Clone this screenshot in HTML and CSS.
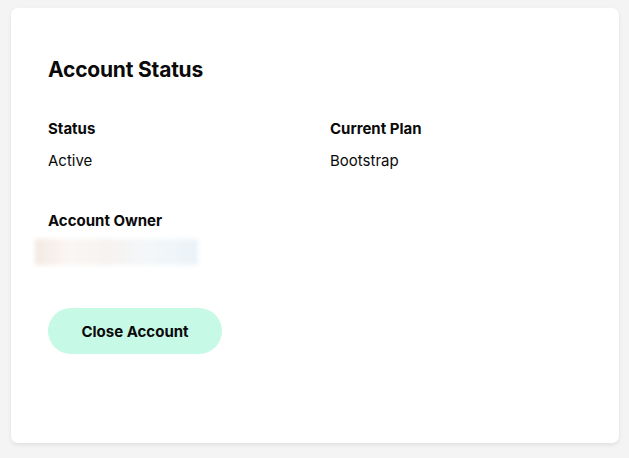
FILE: index.html
```html
<!DOCTYPE html>
<html>
<head>
<meta charset="utf-8">
<link rel="stylesheet" href="styles.css">
</head>
<body>
<div class="card">
  <h2 class="title">Account Status</h2>
  <div class="grid">
    <div class="field">
      <div class="label">Status</div>
      <div class="value">Active</div>
    </div>
    <div class="field">
      <div class="label">Current Plan</div>
      <div class="value">Bootstrap</div>
    </div>
    <div class="field">
      <div class="label">Account Owner</div>
      <div class="blur"></div>
    </div>
  </div>
  <button class="btn">Close Account</button>
</div>
</body>
</html>
```
FILE: styles.css
```css
html, body {
  margin: 0;
  padding: 0;
  background: #f4f4f4;
  font-family: Inter, "Noto Sans", sans-serif;
  color: #0a0a0a;
}
body {
  padding: 8px 10px 15px 11px;
}
.card {
  background: #fff;
  border-radius: 7px;
  box-shadow: 0 2px 4px rgba(0,0,0,0.08);
  height: 435px;
  box-sizing: border-box;
  padding: 50px 37px 0 37px;
}
.title {
  margin: 0;
  font-size: 21px;
  font-weight: 700;
  letter-spacing: -0.2px;
  line-height: 24px;
}
.grid {
  display: grid;
  grid-template-columns: 282px 1fr;
  row-gap: 42px;
  margin-top: 38px;
}
.label {
  font-size: 15px;
  font-weight: 700;
  line-height: 18px;
}
.value {
  font-size: 15px;
  line-height: 18px;
  margin-top: 14px;
}
.blur {
  margin-top: 9px;
  margin-left: -13px;
  width: 163px;
  height: 26px;
  background: linear-gradient(90deg, #f3e9e3 0%, #faf6f3 20%, #f6f3f1 45%, #f4f7f9 70%, #eaf3f8 100%);
  filter: blur(2px);
}
.btn {
  margin-top: 43px;
  width: 174px;
  height: 46px;
  border: none;
  border-radius: 23px;
  background: #c6f9e6;
  font-family: Inter, "Noto Sans", sans-serif;
  font-size: 15px;
  font-weight: 700;
  color: #0a0a0a;
  cursor: pointer;
}
```
